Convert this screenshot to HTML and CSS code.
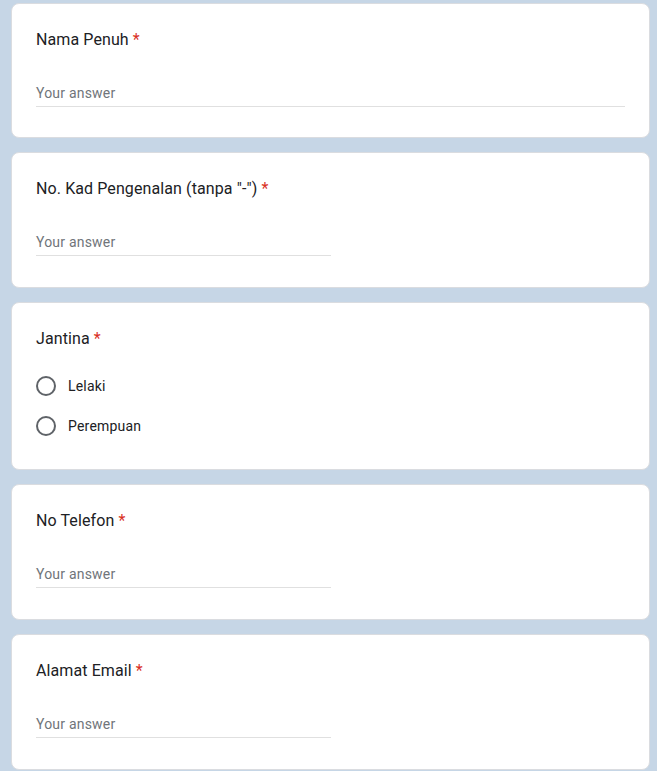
FILE: index.html
```html
<!DOCTYPE html>
<html lang="ms">
<head>
<meta charset="utf-8">
<title>Borang</title>
<link rel="stylesheet" href="styles.css">
</head>
<body>
<main class="form">
  <section class="card card-first">
    <div class="title">Nama Penuh <span class="req">*</span></div>
    <div class="answer full"><span class="ph">Your answer</span></div>
  </section>
  <section class="card">
    <div class="title">No. Kad Pengenalan (tanpa "-") <span class="req">*</span></div>
    <div class="answer half"><span class="ph">Your answer</span></div>
  </section>
  <section class="card card-radio">
    <div class="title title-radio">Jantina <span class="req">*</span></div>
    <div class="options">
      <label class="option"><span class="radio"></span><span class="opt-text">Lelaki</span></label>
      <label class="option"><span class="radio"></span><span class="opt-text">Perempuan</span></label>
    </div>
  </section>
  <section class="card">
    <div class="title">No Telefon <span class="req">*</span></div>
    <div class="answer half"><span class="ph">Your answer</span></div>
  </section>
  <section class="card">
    <div class="title">Alamat Email <span class="req">*</span></div>
    <div class="answer half"><span class="ph">Your answer</span></div>
  </section>
</main>
</body>
</html>
```

FILE: styles.css
```css
html, body {
  margin: 0;
  padding: 0;
  background: #c6d6e6;
  height: 100%;
  overflow: hidden;
}

body {
  font-family: Roboto, "Liberation Sans", Arial, sans-serif;
  color: #202124;
}

.form {
  display: flex;
  flex-direction: column;
  gap: 14px;
  padding: 3px 7px 0 11px;
}

.card {
  background: #fff;
  border: 1px solid #dadce0;
  border-radius: 8px;
  padding: 24px 24px 0;
  height: 136px;
  box-sizing: border-box;
  flex-shrink: 0;
}

.card-first { height: 135px; }
.card-radio { height: 168px; }

.title {
  font-size: 16px;
  line-height: 24px;
  letter-spacing: 0.1px;
  color: #202124;
}

.req {
  color: #d93025;
}

.answer {
  margin-top: 16px;
  padding-top: 15px;
  padding-bottom: 3px;
  border-bottom: 1px solid #e0e0e0;
}

.answer.half {
  width: 50%;
}

.ph {
  display: block;
  font-size: 14px;
  line-height: 20px;
  letter-spacing: 0.2px;
  color: #70757a;
}

.title-radio {
  margin-bottom: 15px;
}

.options {
  display: flex;
  flex-direction: column;
}

.option {
  display: flex;
  align-items: center;
  height: 40px;
  gap: 12px;
}

.radio {
  width: 20px;
  height: 20px;
  box-sizing: border-box;
  border: 2px solid #5f6368;
  border-radius: 50%;
  flex-shrink: 0;
}

.opt-text {
  font-size: 14px;
  letter-spacing: 0.2px;
  color: #202124;
}
```
